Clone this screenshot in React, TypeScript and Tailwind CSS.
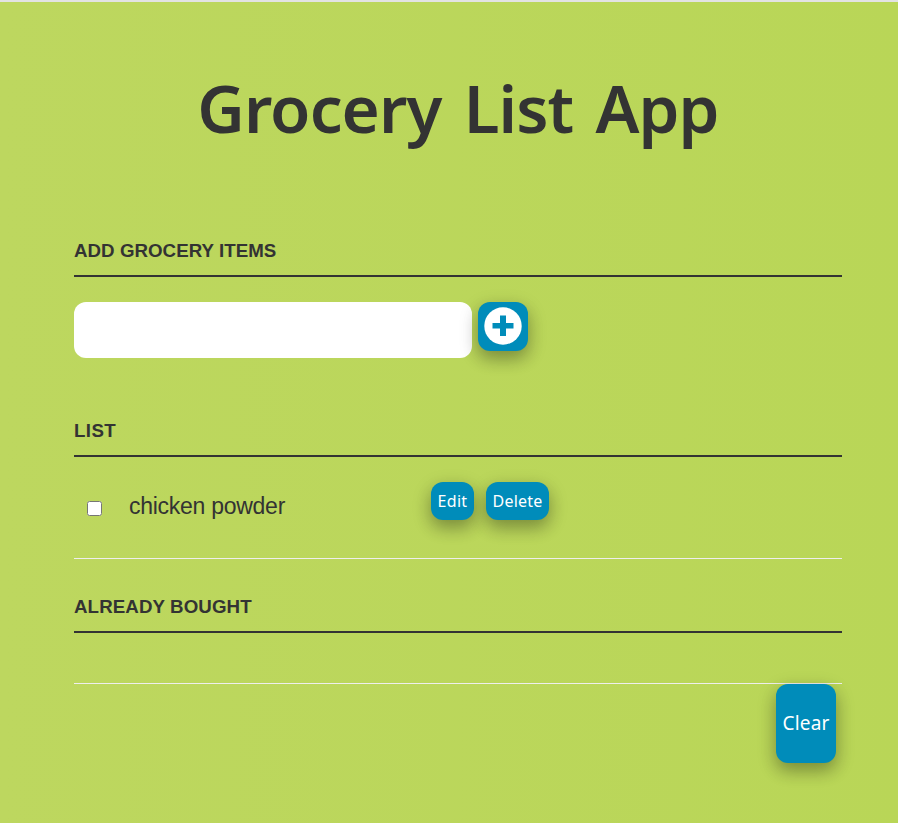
import React from "react";

const humanist = "font-['Noto_Sans','Open_Sans',sans-serif]";
const shadow = "shadow-[0_8px_16px_0_rgba(0,0,0,0.2),0_6px_20px_0_rgba(0,0,0,0.19)]";

function SectionTitle({ children, spacing }: { children: React.ReactNode; spacing: string }) {
  return (
    <h3 className={`h-[37px] border-b-2 border-[#333] text-[18.72px] leading-[21px] font-bold uppercase ${spacing}`}>
      {children}
    </h3>
  );
}

export default function App() {
  return (
    <div className="h-[823px] overflow-hidden border-t-2 border-[#e3e3e3] bg-linear-to-r from-[#bdd75f] to-[#b9d657] px-[74px] pr-[56px] font-['Liberation_Sans',Arial,sans-serif] text-[#333]">
      <h1 className={`${humanist} mt-[66px] h-[93px] text-center text-[65.5px] leading-[80px] font-semibold tracking-[-0.9px] [word-spacing:6px] whitespace-nowrap`}>
        Grocery List App
      </h1>

      <section className="mt-[79px]">
        <SectionTitle spacing="tracking-[0.04px]">Add Grocery Items</SectionTitle>
        <div className="mt-[25px] flex items-start gap-[6px]">
          <input aria-label="Grocery item" className="h-14 w-[398px] rounded-xl bg-white px-4 text-xl outline-none" />
          <button aria-label="Add" className={`flex h-[49px] w-[50px] items-center justify-center rounded-xl bg-[#008cba] ${shadow}`}>
            <svg viewBox="0 0 38 38" className="-mt-px size-[38px]">
              <circle cx="19" cy="19" r="18.7" fill="white" />
              <path d="M16 8.5h6V16h7.500v5.500H22V29h-6v-7.500H8.500V16H16z" fill="#008cba" />
            </svg>
          </button>
        </div>
      </section>

      <section className="mt-[62px]">
        <SectionTitle spacing="tracking-[0.4px]">List</SectionTitle>
        <div className="flex h-[102px] items-start border-b border-[#eee]">
          <input type="checkbox" aria-label="chicken powder" className="mt-[44px] ml-[13px] size-[15px] shrink-0" />
          <label className="mt-[35px] ml-[27px] w-[302px] text-[23px] leading-7 tracking-[-0.27px] whitespace-nowrap">chicken powder</label>
          <button className={`${humanist} mt-[25px] h-[38px] w-[43px] rounded-xl bg-[#008cba] text-base tracking-[0.3px] text-white ${shadow}`}>Edit</button>
          <button className={`${humanist} mt-[25px] ml-3 h-[38px] w-[63px] rounded-xl bg-[#008cba] text-base tracking-[0.2px] text-white ${shadow}`}>Delete</button>
        </div>
      </section>

      <section className="mt-[37px]">
        <SectionTitle spacing="tracking-[0.1px]">Already Bought</SectionTitle>
        <div className="h-[51px] border-b border-[#eee]" />
        <div className="flex justify-end pr-[6px]">
          <button className={`${humanist} h-[79px] w-[60px] rounded-xl bg-[#008cba] text-[19px] tracking-[0.2px] text-white ${shadow}`}>Clear</button>
        </div>
      </section>
    </div>
  );
}
